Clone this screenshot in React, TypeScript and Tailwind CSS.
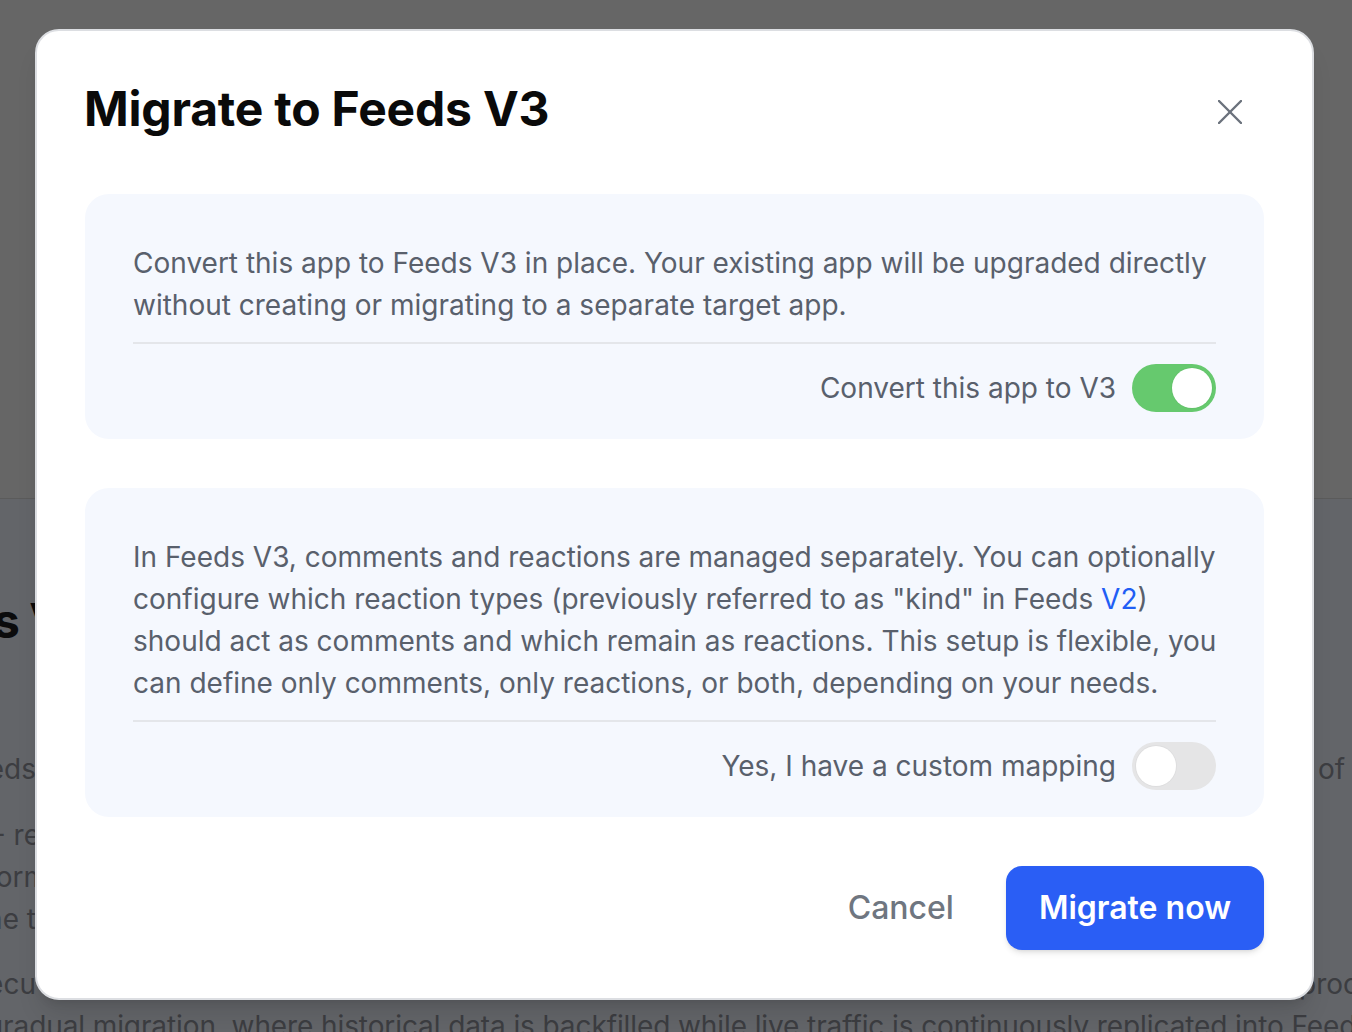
import React from "react";

function Toggle({ on }: { on: boolean }) {
  return (
    <div
      className={
        on
          ? "w-[84px] h-[48px] rounded-full bg-[#66c96e] flex items-center justify-end p-[4px] shrink-0"
          : "w-[84px] h-[48px] rounded-full bg-[#e5e5e6] flex items-center justify-start p-[4px] shrink-0"
      }
    >
      <div className="w-[40px] h-[40px] rounded-full bg-white shadow-[0_0_0_1px_rgba(0,0,0,0.03)]" />
    </div>
  );
}

function BgLine({
  left,
  leftW,
  right,
  rightW,
  mt,
}: {
  left: string;
  leftW: string;
  right?: string;
  rightW?: string;
  mt?: string;
}) {
  return (
    <div className={"flex h-[42px] items-center " + (mt ?? "")}>
      <div className={leftW + " flex justify-end whitespace-nowrap shrink-0"}>{left}</div>
      <div className="flex-1" />
      {right ? <div className={(rightW ?? "") + " whitespace-nowrap shrink-0"}>{right}</div> : null}
    </div>
  );
}

export default function App() {
  return (
    <div
      className="relative w-[1352px] h-[1032px] overflow-hidden"
      style={{ fontFamily: "Inter, 'Noto Sans', 'Liberation Sans', sans-serif" }}
    >
      {/* background page under overlay */}
      <div className="h-[499px] bg-[#666666] border-b border-[#5b5b5b]" />
      <div className="h-[533px] bg-[#636569] pt-[92px] text-[28px] leading-[42px] text-[#3c3d41] overflow-hidden">
        <div className="flex h-[60px] items-center text-[48px] font-bold text-[#0b0b0c]">
          <div className="w-[94px] flex justify-end whitespace-nowrap shrink-0 tracking-[-1px]">Feeds V3</div>
        </div>
        <BgLine left="Feeds" leftW="w-[36px]" right="of" rightW="w-[34px]" mt="mt-[97px]" />
        <BgLine left="V3 - re" leftW="w-[40px]" mt="mt-[24px]" />
        <BgLine left="inform" leftW="w-[48px]" />
        <BgLine left="the t" leftW="w-[36px]" />
        <BgLine left="execu" leftW="w-[36px]" right="proc" rightW="w-[53px]" mt="mt-[23px]" />
        <div className="h-[42px] whitespace-nowrap ml-[-14px] tracking-[-0.1px]">
          gradual migration, where historical data is backfilled while live traffic is continuously replicated into Feeds V3.
        </div>
      </div>

      {/* modal */}
      <div className="absolute left-[35px] top-[29px] w-[1279px] bg-white rounded-[24px] border-2 border-[#dcdee2] shadow-xl p-12">
        <div className="flex items-start justify-between mb-[55px]">
          <h2 className="text-[48px] leading-[60px] font-bold text-[#0a0a0a] tracking-[-0.2px] ml-[-1px]">Migrate to Feeds V3</h2>
          <button className="mt-[21px] mr-[22px] w-[24px] h-[24px] flex items-center justify-center">
            <svg width="24" height="24" viewBox="0 0 24 24" fill="none" stroke="#6b727c" strokeWidth="2.4" strokeLinecap="round">
              <line x1="1" y1="1" x2="23" y2="23" />
              <line x1="23" y1="1" x2="1" y2="23" />
            </svg>
          </button>
        </div>

        <div className="flex flex-col gap-[49px]">
          <div className="bg-[#f5f8fe] rounded-[24px] px-12 pt-12 pb-[27px]">
            <p className="text-[28px] leading-[42px] text-[#59606c] mr-[-8px]">
              Convert this app to Feeds V3 in place. Your existing app will be upgraded directly without creating or
              migrating to a separate target app.
            </p>
            <div className="mt-4 h-[2px] bg-[#e4e6ea]" />
            <div className="mt-5 flex items-center justify-end gap-4">
              <span className="text-[28px] leading-[42px] text-[#59606c]">Convert this app to V3</span>
              <Toggle on={true} />
            </div>
          </div>

          <div className="bg-[#f5f8fe] rounded-[24px] px-12 pt-12 pb-[27px]">
            <p className="text-[28px] leading-[42px] text-[#59606c] mr-[-8px]">
              In Feeds V3, comments and reactions are managed separately. You can optionally configure which reaction
              types (previously referred to as "kind" in Feeds <span className="text-[#1f5ef5]">V2</span>) should act as
              comments and which remain as reactions. This setup is flexible, you can define only comments, only
              reactions, or both, depending on your needs.
            </p>
            <div className="mt-4 h-[2px] bg-[#e4e6ea]" />
            <div className="mt-5 flex items-center justify-end gap-4">
              <span className="text-[28px] leading-[42px] text-[#59606c]">Yes, I have a custom mapping</span>
              <Toggle on={false} />
            </div>
          </div>
        </div>

        <div className="mt-[49px] flex items-center justify-end gap-[18px]">
          <button className="h-[84px] px-[34px] text-[32px] font-medium text-[#6f7680]">Cancel</button>
          <button className="h-[84px] px-[33px] rounded-[16px] bg-[#2a5ef5] text-white text-[32px] font-semibold shadow-md">
            Migrate now
          </button>
        </div>
      </div>
    </div>
  );
}
